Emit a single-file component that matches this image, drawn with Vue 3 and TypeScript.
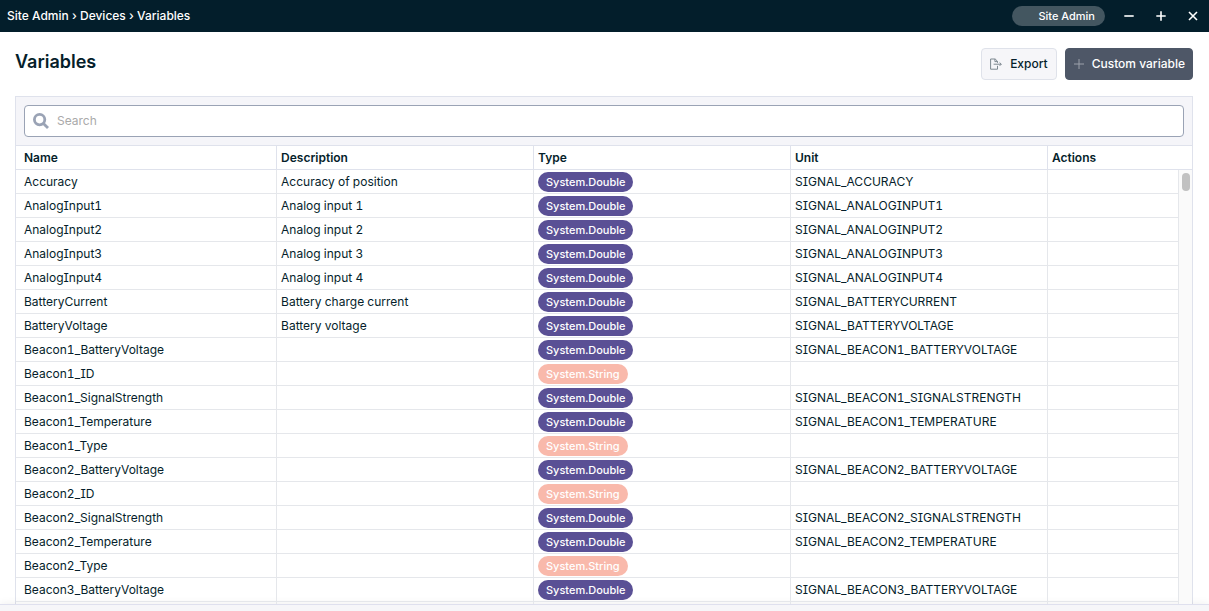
<script setup lang="ts">
import { computed, ref } from 'vue'

interface Variable {
  name: string
  description: string
  type: 'Double' | 'String'
  unit: string
}

const v = (name: string, description = '', type: Variable['type'] = 'Double'): Variable => ({
  name,
  description,
  type,
  unit: type === 'Double' ? 'SIGNAL_' + name.toUpperCase() : '',
})

const variables: Variable[] = [
  v('Accuracy', 'Accuracy of position'),
  v('AnalogInput1', 'Analog input 1'),
  v('AnalogInput2', 'Analog input 2'),
  v('AnalogInput3', 'Analog input 3'),
  v('AnalogInput4', 'Analog input 4'),
  v('BatteryCurrent', 'Battery charge current'),
  v('BatteryVoltage', 'Battery voltage'),
  v('Beacon1_BatteryVoltage'),
  v('Beacon1_ID', '', 'String'),
  v('Beacon1_SignalStrength'),
  v('Beacon1_Temperature'),
  v('Beacon1_Type', '', 'String'),
  v('Beacon2_BatteryVoltage'),
  v('Beacon2_ID', '', 'String'),
  v('Beacon2_SignalStrength'),
  v('Beacon2_Temperature'),
  v('Beacon2_Type', '', 'String'),
  v('Beacon3_BatteryVoltage'),
]

const query = ref('')
const rows = computed(() =>
  variables.filter((item) => item.name.toLowerCase().includes(query.value.toLowerCase())),
)
</script>

<template>
  <div class="window">
    <header class="titlebar">
      <nav class="crumbs">Site Admin › Devices › Variables</nav>
      <span class="role">Site Admin</span>
      <button class="win" type="button" aria-label="Minimize">
        <svg width="12" height="12" viewBox="0 0 12 12"><path d="M1.3 6h9.4" /></svg>
      </button>
      <button class="win" type="button" aria-label="Maximize">
        <svg width="12" height="12" viewBox="0 0 12 12"><path d="M1.3 6h9.4M6 1.3v9.4" /></svg>
      </button>
      <button class="win" type="button" aria-label="Close">
        <svg width="12" height="12" viewBox="0 0 12 12"><path d="M2 2l8 8M10 2l-8 8" /></svg>
      </button>
    </header>

    <main class="page">
      <div class="heading">
        <h1>Variables</h1>
        <div class="tools">
          <button class="btn" type="button">
            <svg width="12" height="12" viewBox="0 0 12 12">
              <path d="M7.5 7.8v3.4H.6V1h4.6l2.3 2.3v1.5M4.9 1v2.6h2.6M3.6 6.2h7.6M9.6 4.5l1.7 1.7-1.7 1.7" />
            </svg>
            Export
          </button>
          <button class="btn dark" type="button">
            <svg width="10" height="10" viewBox="0 0 10 10"><path d="M0 5h10M5 0v10" /></svg>
            Custom variable
          </button>
        </div>
      </div>

      <section class="panel">
        <div class="searchbar">
          <label class="search">
            <svg width="16" height="16" viewBox="0 0 16 16">
              <circle cx="6.6" cy="6.6" r="5.2" />
              <path d="M10.4 10.4l4.6 4.6" />
            </svg>
            <input v-model="query" type="text" placeholder="Search" aria-label="Search" />
          </label>
        </div>
        <div class="grid">
          <div class="scroller">
            <table>
              <thead>
                <tr>
                  <th class="first">Name</th>
                  <th>Description</th>
                  <th>Type</th>
                  <th>Unit</th>
                  <th class="last">Actions</th>
                </tr>
              </thead>
              <tbody>
                <tr v-for="row in rows" :key="row.name">
                  <td>{{ row.name }}</td>
                  <td>{{ row.description }}</td>
                  <td>
                    <span class="tag" :class="{ text: row.type === 'String' }">System.{{ row.type }}</span>
                  </td>
                  <td>{{ row.unit }}</td>
                  <td></td>
                </tr>
                <tr><td></td><td></td><td></td><td></td><td></td></tr>
              </tbody>
            </table>
          </div>
          <div class="track"><div class="thumb"></div></div>
        </div>
      </section>
    </main>
    <footer class="dock"></footer>
  </div>
</template>

<style>
body {
  margin: 0;
}
</style>

<style scoped>
.window {
  display: flex;
  flex-direction: column;
  height: 100vh;
  background: #fff;
  color: #051e2b;
  font: 12px/16px Inter, "Liberation Sans", sans-serif;
  font-feature-settings: "cv08", "tnum";
}
button,
input {
  font: inherit;
  font-feature-settings: inherit;
  color: inherit;
}
svg {
  fill: none;
  stroke: currentColor;
  flex: none;
}
.titlebar {
  display: flex;
  align-items: center;
  flex: none;
  height: 32px;
  padding-left: 7px;
  background: #031e2b;
  color: #fff;
  font-weight: 500;
}
.crumbs {
  flex: 1;
}
.role {
  padding: 2px 10px 2px 26px;
  margin-right: 8px;
  border-radius: 10px;
  background: #435660;
  font-size: 11px;
}
.win {
  display: flex;
  align-items: center;
  justify-content: center;
  width: 32px;
  height: 32px;
  padding: 0;
  border: 0;
  background: none;
}
.win svg {
  stroke-width: 1.6;
}
.page {
  display: flex;
  flex-direction: column;
  flex: 1;
  min-height: 0;
  padding: 16px 16px 0 15px;
}
.heading {
  display: flex;
  justify-content: space-between;
  flex: none;
  height: 48px;
}
h1 {
  margin: 0;
  font-size: 18px;
  line-height: 27px;
  font-weight: 600;
}
.tools {
  display: flex;
  gap: 8px;
}
.btn {
  display: flex;
  align-items: center;
  gap: 8px;
  box-sizing: border-box;
  height: 32px;
  padding: 0 8px;
  border: 1px solid #dfe2ea;
  border-radius: 4px;
  background: #f6f6f9;
  font-weight: 500;
}
.btn svg {
  stroke: #7d8890;
}
.btn.dark {
  padding: 0 7px 0 8px;
  border-color: #4e5767;
  background: #4e5767;
  color: #fff;
}
.btn.dark svg {
  stroke: #9ba1ab;
}
.panel {
  display: flex;
  flex-direction: column;
  flex: 1;
  min-height: 0;
  border: 1px solid #dfe2ec;
  border-bottom: 0;
}
.searchbar {
  flex: none;
  padding: 8px;
  border-bottom: 1px solid #dfe2ec;
  background: #f5f5f9;
}
.search {
  display: flex;
  align-items: center;
  gap: 8px;
  box-sizing: border-box;
  height: 32px;
  padding: 0 8px;
  border: 1px solid #9aa3b5;
  border-radius: 4px;
  background: #fff;
}
.search svg {
  stroke: #9aa3b5;
  stroke-width: 2.8;
}
.search input {
  flex: 1;
  min-width: 0;
  padding: 0;
  border: 0;
  outline: 0;
  background: none;
}
.search input::placeholder {
  color: #aaa;
  opacity: 1;
}
.grid {
  position: relative;
  flex: 1;
  min-height: 0;
}
.scroller {
  height: 100%;
  overflow-y: auto;
  scrollbar-width: none;
}
table {
  width: 100%;
  table-layout: fixed;
  border-collapse: separate;
  border-spacing: 0;
}
th,
td {
  box-sizing: border-box;
  height: 24px;
  padding: 0 4px;
  border-right: 1px solid #e5e7eb;
  border-bottom: 1px solid #e5e7eb;
  text-align: left;
  white-space: nowrap;
}
th {
  position: sticky;
  top: 0;
  width: 21.85%;
  border-color: #dfe2ec;
  background: #fff;
  font-weight: 600;
}
th.first {
  width: 22.2%;
}
th.last {
  width: auto;
}
th:first-child,
td:first-child {
  padding-left: 8px;
}
th:last-child,
td:last-child {
  border-right: 0;
}
.tag {
  display: block;
  width: fit-content;
  padding: 2px 8px;
  border-radius: 10px;
  background: #5a5095;
  color: #fff;
  font-size: 11px;
  font-weight: 500;
}
.tag.text {
  background: #f9b9ab;
}
.track {
  position: absolute;
  top: 24px;
  right: 0;
  bottom: 0;
  width: 13px;
  border-left: 1px solid #e5e7eb;
  background: #fafafa;
}
.thumb {
  width: 8px;
  height: 18px;
  margin: 3px auto 0 3px;
  border-radius: 4px;
  background: #c1c1c1;
}
.dock {
  flex: none;
  height: 6px;
  border-top: 1px solid #dfe0ee;
  background: #f6f6f9;
  box-shadow: 0 0 8px rgba(0, 0, 0, 0.08);
}
</style>
